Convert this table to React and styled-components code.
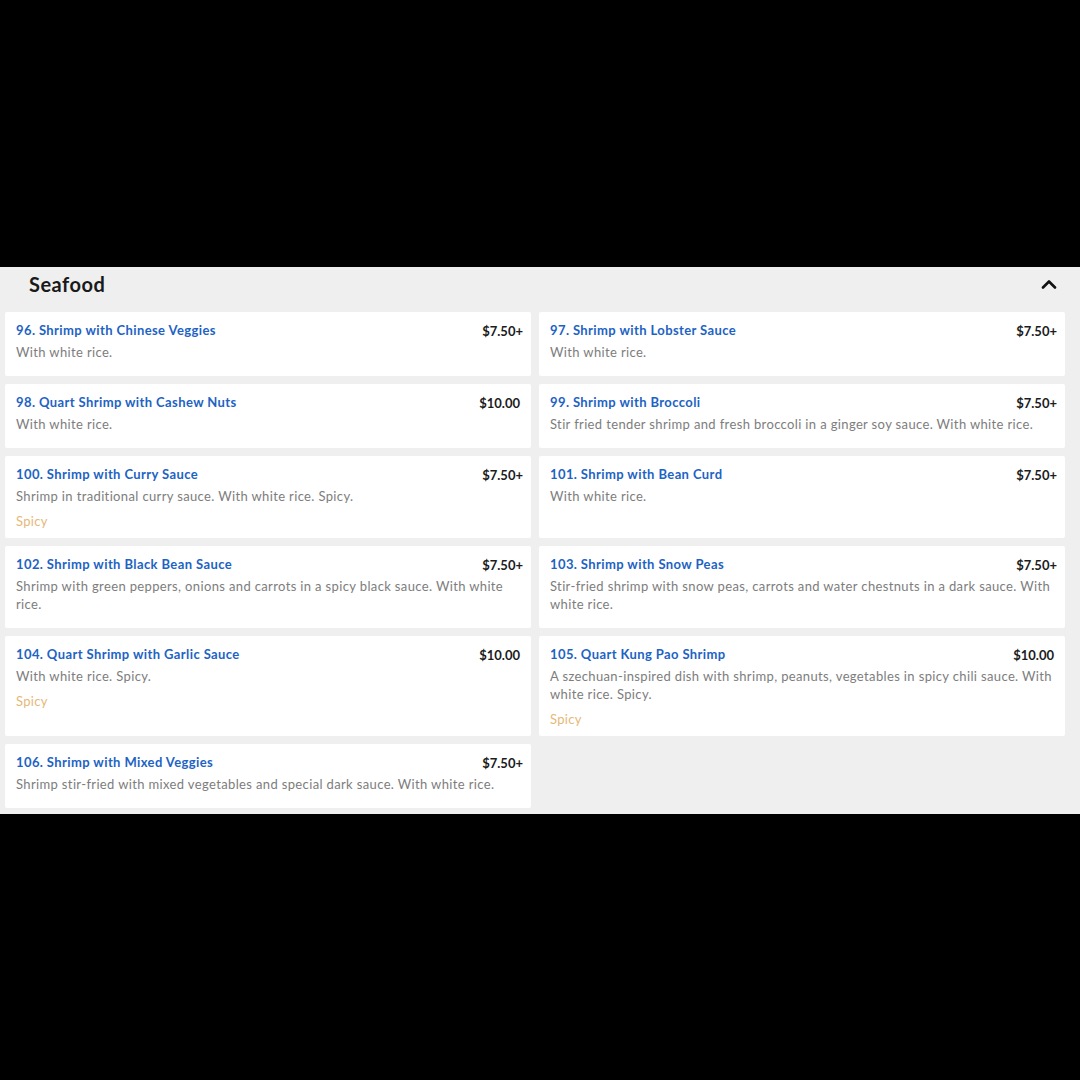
import React from "react";
import styled, { createGlobalStyle } from "styled-components";

const Global = createGlobalStyle`
  html, body { margin: 0; padding: 0; background: #000; }
  body { font-family: Lato, "Open Sans", sans-serif; }
`;

const Page = styled.div`
  padding-top: 267px;
  min-height: 1080px;
  box-sizing: border-box;
`;

const Panel = styled.section`
  background: #efefef;
  padding: 0 15px 6px 5px;
`;

const Header = styled.header`
  height: 34px;
  display: flex;
  align-items: center;
  justify-content: space-between;
  padding: 0 8px 0 24px;
  box-sizing: border-box;
  margin-bottom: 11px;
`;

const Title = styled.h2`
  margin: 0;
  font-size: 20px;
  font-weight: 700;
  color: #1a1a1a;
  letter-spacing: 0.5px;
`;

const Toggle = styled.button`
  border: 0;
  background: none;
  padding: 0;
  display: flex;
  color: #111;
`;

const Grid = styled.div`
  display: grid;
  grid-template-columns: 1fr 1fr;
  gap: 8px;
`;

const Card = styled.article`
  background: #fff;
  border-radius: 2px;
  padding: 9px 8px 8px 11px;
  min-height: 64px;
  box-sizing: border-box;
`;

const TopRow = styled.div`
  display: flex;
  justify-content: space-between;
  align-items: flex-start;
  gap: 12px;
  height: 18px;
`;

const Name = styled.h3`
  margin: 0;
  font-size: 13px;
  line-height: 18px;
  font-weight: 700;
  color: #1d63c4;
  letter-spacing: 0.4px;
`;

const Price = styled.span`
  font-size: 13px;
  line-height: 18px;
  font-weight: 700;
  color: #1c1c1c;
  transform: translateY(1px);
  margin-right: ${(p) => (p.$plus ? "0" : "3px")};
  white-space: nowrap;
`;

const Desc = styled.p`
  margin: 4px 0 7px;
  font-size: 13px;
  line-height: 18px;
  color: #7d7d7d;
  letter-spacing: 0.36px;
`;

const Tag = styled.div`
  font-size: 13px;
  line-height: 18px;
  color: #e6b878;
  letter-spacing: 0.3px;
`;

const items = [
  { n: "96. Shrimp with Chinese Veggies", p: "$7.50+", d: "With white rice." },
  { n: "97. Shrimp with Lobster Sauce", p: "$7.50+", d: "With white rice." },
  { n: "98. Quart Shrimp with Cashew Nuts", p: "$10.00", d: "With white rice." },
  { n: "99. Shrimp with Broccoli", p: "$7.50+", d: "Stir fried tender shrimp and fresh broccoli in a ginger soy sauce. With white rice." },
  { n: "100. Shrimp with Curry Sauce", p: "$7.50+", d: "Shrimp in traditional curry sauce. With white rice. Spicy.", s: true },
  { n: "101. Shrimp with Bean Curd", p: "$7.50+", d: "With white rice." },
  { n: "102. Shrimp with Black Bean Sauce", p: "$7.50+", d: "Shrimp with green peppers, onions and carrots in a spicy black sauce. With white rice." },
  { n: "103. Shrimp with Snow Peas", p: "$7.50+", d: "Stir-fried shrimp with snow peas, carrots and water chestnuts in a dark sauce. With white rice." },
  { n: "104. Quart Shrimp with Garlic Sauce", p: "$10.00", d: "With white rice. Spicy.", s: true },
  { n: "105. Quart Kung Pao Shrimp", p: "$10.00", d: "A szechuan-inspired dish with shrimp, peanuts, vegetables in spicy chili sauce. With white rice. Spicy.", s: true },
  { n: "106. Shrimp with Mixed Veggies", p: "$7.50+", d: "Shrimp stir-fried with mixed vegetables and special dark sauce. With white rice." },
];

export default function App() {
  return (
    <Page>
      <Global />
      <Panel>
        <Header>
          <Title>Seafood</Title>
          <Toggle aria-label="Collapse">
            <svg width="16" height="10" viewBox="0 0 16 10" fill="none">
              <path d="M2 8.5 L8 2.5 L14 8.5" stroke="#111" strokeWidth="2.6" strokeLinecap="round" strokeLinejoin="round" />
            </svg>
          </Toggle>
        </Header>
        <Grid>
          {items.map((it) => (
            <Card key={it.n}>
              <TopRow>
                <Name>{it.n}</Name>
                <Price $plus={it.p.endsWith("+")}>{it.p}</Price>
              </TopRow>
              <Desc>{it.d}</Desc>
              {it.s && <Tag>Spicy</Tag>}
            </Card>
          ))}
        </Grid>
      </Panel>
    </Page>
  );
}
